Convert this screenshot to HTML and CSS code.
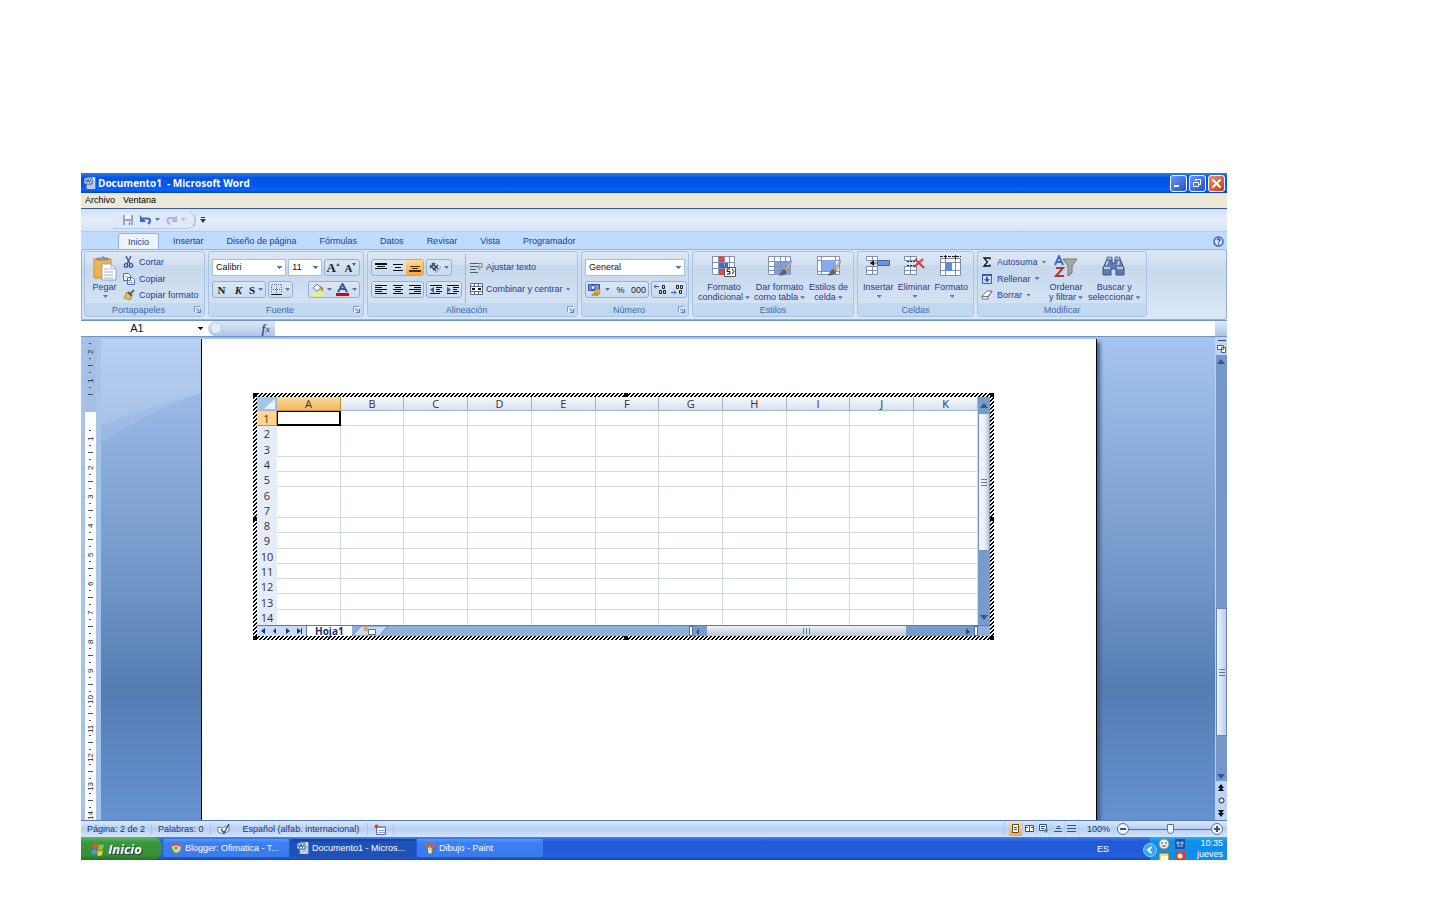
FILE: index.html
```html
<!DOCTYPE html>
<html lang="es">
<head>
    <meta charset="UTF-8">
    <title>Documento1 - Microsoft Word</title>
    <link rel="stylesheet" href="styles.css">
</head>
<body>
<svg class="defs" width="0" height="0">
    <symbol id="word" viewBox="0 0 12 12">
        <path d="M3 0h8v12H3z" fill="#fff" stroke="#8fa8d0"/>
        <path d="M6 4h4M6 6h4M4 8h6M4 10h6" stroke="#6f8dc4"/>
        <path d="M0 1h8v6H0z" fill="#e7effc" stroke="#3059a8"/>
        <path d="M1.500 2.500l1 3 1.500-3 1.500 3 1-3" fill="none" stroke="#1d3f94"/>
    </symbol>
    <symbol id="launcher" viewBox="0 0 7 7">
        <path d="M1.500 6.500V1.500H6.500" fill="none" stroke="#fff"/>
        <path d="M.5 6V.5H6" fill="none" stroke="#8099c0"/>
        <path d="M2.500 2.500l3 3M6.500 3v3.500H3" fill="none" stroke="#5f7dae"/>
    </symbol>
    <symbol id="brush" viewBox="0 0 14 16">
        <path d="M13 0L8 8l2 2 4-9z" fill="#b9c3cf" stroke="#76818f" stroke-width=".6"/>
        <path d="M8 7L6 9l3 3 1.500-2z" fill="#c79a50"/>
        <path d="M6 9c-3 1-2 4-6 6 4 1 8 0 9-3z" fill="#5b6470"/>
    </symbol>
</svg>
<div class="window">
    <div class="titleBar">
        <svg class="icon12"><use href="#word"/></svg>
        <h1>Documento1 &nbsp;- Microsoft Word</h1>
        <button class="winBtn" aria-label="Minimizar"><svg width="15" height="15"><path d="M3 10h5" stroke="#fff" stroke-width="2"/></svg></button>
        <button class="winBtn" aria-label="Restaurar"><svg width="15" height="15"><path d="M5.500 5V3.500h5v5H9M5 3.500h6M3.500 6.500h5v4h-5z" fill="none" stroke="#fff"/></svg></button>
        <button class="winBtn closeBtn" aria-label="Cerrar"><svg width="15" height="15"><path d="M3.500 3.500l8 8M11.500 3.500l-8 8" stroke="#fff" stroke-width="2"/></svg></button>
    </div>
    <div class="menuBar">
        <button>Archivo</button>
        <button>Ventana</button>
    </div>
    <div class="quickBar">
        <div class="quickTools">
            <button aria-label="Guardar"><svg width="12" height="12"><path d="M1 1h10v10H1z" fill="#98a8c4"/><path d="M3 1h6v4H3z" fill="#f3f7fd"/><path d="M3 7h6v4H3z" fill="#dfe7f3"/><path d="M7 8h1v3H7z" fill="#667794"/></svg></button>
            <button aria-label="Deshacer"><svg width="12" height="12"><path d="M3 4.500h4c4 0 4 3 1 5.500" fill="none" stroke="#3a66c0" stroke-width="2"/><path d="M0 1v7h6z" fill="#3a66c0"/></svg><i class="arrow"></i></button>
            <button class="off" aria-label="Rehacer"><svg width="12" height="12"><path d="M8 4H4c-4 0-3 5 0 6" fill="none" stroke="#a8b6cf" stroke-width="2"/><path d="M11 1v7H5z" fill="#a8b6cf"/></svg><i class="arrow"></i></button>
        </div>
        <button class="more" aria-label="Personalizar"><svg width="6" height="6"><path d="M1 .5h4" stroke="#1f3c7a"/><path d="M0 2h6L3 6z" fill="#1f3c7a"/></svg></button>
    </div>
    <div class="tabs">
        <button class="tab selectedTab">Inicio</button>
        <button class="tab">Insertar</button>
        <button class="tab">Diseño de página</button>
        <button class="tab">Fórmulas</button>
        <button class="tab">Datos</button>
        <button class="tab">Revisar</button>
        <button class="tab">Vista</button>
        <button class="tab">Programador</button>
        <button class="help" aria-label="Ayuda"><svg width="11" height="11"><circle cx="5.500" cy="5.500" r="4.500" fill="#dce9fc" stroke="#3568bd" stroke-width="1.500"/><path d="M4 4q2-2 3 0 0 1-1.500 2M5.500 7v1.500" fill="none" stroke="#2b56aa" stroke-width="1.400"/></svg></button>
    </div>
    <div class="ribbon">
        <div class="group clipboard">
            <div class="groupBody">
                <button class="big paste">
                    <svg width="26" height="26"><path d="M2 4h17v19H2z" fill="#eeb54f" stroke="#c98d35"/><path d="M5 5h11V3h-3q-1-3-4 0H5z" fill="#8d97a8" stroke="#6d7789" stroke-width=".6"/><path d="M10 9h9l5 5v11H10z" fill="#fff" stroke="#8da4c9"/><path d="M19 9v5h5M12 14h5M12 17h9M12 20h9M12 23h9" fill="none" stroke="#9db2d3"/></svg>
                    <span>Pegar</span><i class="arrow"></i>
                </button>
                <div class="list">
                    <button><svg width="12" height="12"><path d="M3 0l4 8M8 0L4 8" stroke="#44628f" stroke-width="1.500"/><circle cx="3" cy="9.500" r="1.800" fill="none" stroke="#2f4f98" stroke-width="1.300"/><circle cx="8" cy="9.500" r="1.800" fill="none" stroke="#2f4f98" stroke-width="1.300"/></svg>Cortar</button>
                    <button><svg width="12" height="12"><path d="M.5.500h5l2 2v5h-7zM4.500 4.500h5l2 2v5h-7z" fill="#f5f9ff" stroke="#4a6eb5"/><path d="M6 7.500h3M6 9.500h4M2 3.500h2" stroke="#7d9bd2"/></svg>Copiar</button>
                    <button><svg width="12" height="12"><path d="M11 1L7 5" stroke="#666" stroke-width="2"/><path d="M4 3l5 5-2 3-6-2z" fill="#e9bf4b" stroke="#9c7524" stroke-width=".7"/><path d="M5 3l4 4" stroke="#485f88" stroke-width="2"/></svg>Copiar formato</button>
                </div>
            </div>
            <div class="groupTitle">Portapapeles<svg width="7" height="7"><use href="#launcher"/></svg></div>
        </div>
        <div class="group fontGroup">
            <div class="groupBody rows">
                <div class="row">
                    <select class="fontName" aria-label="Fuente"><option>Calibri</option></select>
                    <select class="fontSize" aria-label="Tamaño"><option>11</option></select>
                    <div class="btns push">
                        <button class="serif" aria-label="Aumentar fuente">A<svg width="4" height="9"><path d="M0 3l2-3 2 3z" fill="#345ba8"/></svg></button>
                        <button class="serif small" aria-label="Reducir fuente">A<svg width="4" height="9"><path d="M0 0h4L2 3z" fill="#345ba8"/></svg></button>
                    </div>
                </div>
                <div class="row">
                    <div class="btns">
                        <button class="serif small">N</button>
                        <button class="serif small italic">K</button>
                        <button class="serif small">S<i class="arrow"></i></button>
                    </div>
                    <div class="btns">
                        <button aria-label="Bordes"><svg width="11" height="11"><path d="M1 .5h9M.5 1v8M10.500 1v8M5.500 0v9M0 5.500h11" stroke="#5a6e94" stroke-dasharray="1 1"/><path d="M0 10.500h11" stroke="#111"/></svg><i class="arrow"></i></button>
                    </div>
                    <div class="btns push">
                        <button aria-label="Color de relleno"><svg width="13" height="13"><path d="M2 5l4-4 4 4-4 3z" fill="#fff" stroke="#69799a"/><path d="M9 4q3 1 2 4" fill="none" stroke="#c48a24" stroke-width="2"/><path d="M0 10h13v3H0z" fill="#ff0"/></svg><i class="arrow"></i></button>
                        <button aria-label="Color de fuente"><svg width="13" height="13"><path d="M2 9l4.500-8L11 9M4 6h5" fill="none" stroke="#3a55a8" stroke-width="2"/><path d="M0 10h13v3H0z" fill="#e00000"/></svg><i class="arrow"></i></button>
                    </div>
                </div>
            </div>
            <div class="groupTitle">Fuente<svg width="7" height="7"><use href="#launcher"/></svg></div>
        </div>
        <div class="group alignGroup">
            <div class="groupBody">
                <div class="rows alignCol">
                    <div class="row">
                        <div class="btns">
                            <button aria-label="Alinear arriba"><svg width="12" height="11"><path d="M0 1h12v2H0zM2 4h8v1H2zM0 6h12v1H0z" fill="#111"/></svg></button>
                            <button aria-label="Alinear al medio"><svg width="12" height="11"><path d="M1 2h10v1H1zM3 5h6v1H3zM1 8h10v1H1z" fill="#111"/></svg></button>
                            <button class="on" aria-label="Alinear abajo"><svg width="12" height="11"><path d="M1 4h10v1H1zM3 6h6v1H3zM0 8h12v2H0z" fill="#4b3104"/></svg></button>
                        </div>
                        <div class="btns">
                            <button aria-label="Orientación"><svg width="12" height="11"><path d="M1 3l6 6M3 1l6 6M1 6l5-5M4 8l5-5" stroke="#39465f" stroke-width="1.500"/><path d="M7 11l5-6" stroke="#8998b4"/></svg><i class="arrow"></i></button>
                        </div>
                    </div>
                    <div class="row">
                        <div class="btns">
                            <button aria-label="Izquierda"><svg width="12" height="11"><path d="M0 1.500h12M0 3.500h7M0 5.500h12M0 7.500h7M0 9.500h12" stroke="#111"/></svg></button>
                            <button aria-label="Centrar"><svg width="12" height="11"><path d="M1 1.500h10M3 3.500h6M1 5.500h10M3 7.500h6M1 9.500h10" stroke="#111"/></svg></button>
                            <button aria-label="Derecha"><svg width="12" height="11"><path d="M0 1.500h12M5 3.500h7M0 5.500h12M5 7.500h7M0 9.500h12" stroke="#111"/></svg></button>
                        </div>
                        <div class="btns">
                            <button aria-label="Reducir sangría"><svg width="12" height="11"><path d="M0 1.500h12M6 3.500h6M6 5.500h4M6 7.500h6M0 9.500h10" stroke="#111"/><path d="M4 3v6L0 5.500z" fill="#345fb4"/></svg></button>
                            <button aria-label="Aumentar sangría"><svg width="12" height="11"><path d="M0 1.500h12M6 3.500h6M6 5.500h4M6 7.500h6M0 9.500h10" stroke="#111"/><path d="M0 3v6l4-3.500z" fill="#345fb4"/></svg></button>
                        </div>
                    </div>
                </div>
                <div class="list tall">
                    <button><svg width="13" height="12"><path d="M0 2.500h8M0 5.500h8M0 8.500h6M0 11.500h8" stroke="#4c5c7a"/><path d="M8 2.500h4v4H9M10 4L8 6.500 10 9" fill="none" stroke="#a08045"/></svg>Ajustar texto</button>
                    <button><svg width="13" height="12"><path d="M.5.500h12v11H.5zM0 3.500h13M0 8.500h13M4.500 0v3M8.500 0v3M4.500 9v3M8.500 9v3" fill="#fff" stroke="#59688a"/><path d="M2 6h3M8 6h3" stroke="#111" stroke-width="2"/></svg>Combinar y centrar<i class="arrow"></i></button>
                </div>
            </div>
            <div class="groupTitle">Alineación<svg width="7" height="7"><use href="#launcher"/></svg></div>
        </div>
        <div class="group numGroup">
            <div class="groupBody rows">
                <div class="row">
                    <select class="numFormat" aria-label="Formato de número"><option>General</option></select>
                </div>
                <div class="row">
                    <div class="btns grow">
                        <button aria-label="Moneda"><svg width="14" height="13"><path d="M.5 1.500h11v6H.5z" fill="#6f98ea" stroke="#274f9e"/><circle cx="5" cy="4.500" r="2" fill="#fff" stroke="#274f9e"/><path d="M7 6h5v2H7zM6 9h6v2H6zM4 11h6v2H4z" fill="#e7b322" stroke="#89661b" stroke-width=".4"/></svg><i class="arrow"></i></button>
                        <button>%</button>
                        <button>000</button>
                    </div>
                    <div class="btns">
                        <button aria-label="Aumentar decimales"><svg width="13" height="11"><path d="M0 2.500h5M2 .5l-2 2 2 2" fill="none" stroke="#2c5dc0"/><path d="M8.500 1.500h2v3h-2zM5.500 6.500h2v3h-2zM9.500 6.500h2v3h-2z" fill="none" stroke="#222"/></svg></button>
                        <button aria-label="Disminuir decimales"><svg width="13" height="11"><path d="M0 8.500h5M3 6.500l2 2-2 2" fill="none" stroke="#2c5dc0"/><path d="M5.500 1.500h2v3h-2zM9.500 1.500h2v3h-2zM8.500 6.500h2v3h-2z" fill="none" stroke="#222"/></svg></button>
                    </div>
                </div>
            </div>
            <div class="groupTitle">Número<svg width="7" height="7"><use href="#launcher"/></svg></div>
        </div>
        <div class="group stylesGroup">
            <div class="groupBody">
                <button class="big">
                    <svg width="26" height="22"><path d="M1.500 1.500h22v18h-22z" fill="#fff" stroke="#8394b3"/><path d="M7 1h6v19H7z" fill="#e04a4a"/><path d="M7 7h10v6H7z" fill="#4469c8"/><path d="M1 7.500h23M1 13.500h23M7.500 1v19M13.500 1v19M18.500 1v19" stroke="#8394b3"/><path d="M13.500 12.500h11v9h-11z" fill="#fff" stroke="#555"/><path d="M19 14h-3v2.500h3V19h-3M21 14l2 2.500-2 2.500" fill="none" stroke="#111"/></svg>
                    <span>Formato<br>condicional<i class="arrow"></i></span>
                </button>
                <button class="big">
                    <svg width="26" height="22"><path d="M1.500 1.500h22v18h-22z" fill="#fff" stroke="#8394b3"/><path d="M7 6h17v14H7z" fill="#7ea2e8"/><path d="M1 6.500h23M1 11.500h23M1 15.500h23M7.500 1v19M13.500 1v19M18.500 1v19" stroke="#8394b3"/><use href="#brush" x="11" y="5" width="14" height="16"/></svg>
                    <span>Dar formato<br>como tabla<i class="arrow"></i></span>
                </button>
                <button class="big">
                    <svg width="26" height="22"><path d="M1.500 1.500h22v18h-22zM1 5.500h23M1 16.500h23M5.500 1v19M19.500 1v19" fill="#fff" stroke="#8394b3"/><path d="M6 5h14v11H6z" fill="#83a9f0"/><use href="#brush" x="11" y="5" width="14" height="16"/></svg>
                    <span>Estilos de<br>celda<i class="arrow"></i></span>
                </button>
            </div>
            <div class="groupTitle">Estilos</div>
        </div>
        <div class="group cellsGroup">
            <div class="groupBody">
                <button class="big">
                    <svg width="26" height="22"><path d="M1.500 1.500h11v4h-11zM1.500 11.500h11v8h-11zM7.500 1v4M7.500 12v8M1 15.500h12" fill="#fff" stroke="#7d8eae"/><path d="M12.500 5.500h12v5h-12z" fill="#6c94dc" stroke="#4064ac"/><path d="M5 8h7" stroke="#456"/><path d="M5 8l4-3v6z" fill="#111"/></svg>
                    <span>Insertar</span><i class="arrow"></i>
                </button>
                <button class="big">
                    <svg width="26" height="22"><path d="M3.500 1.500h12v4h-12zM3.500 11.500h12v8h-12zM9.500 1v4M9.500 12v8M3 15.500h12" fill="#fff" stroke="#7d8eae"/><path d="M6 6.500h10M6 10.500h10" stroke="#222" stroke-dasharray="2 1"/><path d="M14 4l9 9M22 4l-9 8" stroke="#e8372c" stroke-width="2"/></svg>
                    <span>Eliminar</span><i class="arrow"></i>
                </button>
                <button class="big">
                    <svg width="26" height="22"><path d="M2.500 3.500h20v17h-20zM2 7.500h21M2 15.500h21M7.500 4v17M17.500 4v17" fill="#fff" stroke="#7d8eae"/><path d="M8 8h6v8H8z" fill="#5c8ae0"/><path d="M2 1.500h21" stroke="#222" stroke-dasharray="3 1"/><path d="M7.500 0v4M17.500 0v4" stroke="#222"/></svg>
                    <span>Formato</span><i class="arrow"></i>
                </button>
            </div>
            <div class="groupTitle">Celdas</div>
        </div>
        <div class="group editGroup">
            <div class="groupBody">
                <div class="list">
                    <button><svg width="12" height="12"><path d="M9 3.500V2H3l3.500 4L3 10h6V8.500" fill="none" stroke="#111" stroke-width="1.300"/></svg>Autosuma<i class="arrow"></i></button>
                    <button><svg width="12" height="12"><path d="M1.500 1.500h9v9h-9z" fill="#cfe0fb" stroke="#365fae"/><path d="M1 1h10v2H1z" fill="#365fae"/><path d="M5 4h2v2h2L6 9.500 3 6h2z" fill="#2d61c8"/></svg>Rellenar<i class="arrow"></i></button>
                    <button><svg width="12" height="12"><path d="M1 7l5-5h5L7 8v2H1z" fill="#fff" stroke="#6a7182"/><path d="M1 7.500h6l4-5" fill="none" stroke="#6a7182"/></svg>Borrar<i class="arrow"></i></button>
                </div>
                <button class="big">
                    <svg width="26" height="24"><path d="M2 10l4-9 4 9M4 7h5" fill="none" stroke="#3c6cc4" stroke-width="2"/><path d="M3 13h7l-7 8h8" fill="none" stroke="#a83a2e" stroke-width="2"/><path d="M10 4h14l-5 7v7l-4 3V11z" fill="#a7a7a3" stroke="#77777a"/></svg>
                    <span>Ordenar<br>y filtrar<i class="arrow"></i></span>
                </button>
                <button class="big">
                    <svg width="26" height="24"><path d="M6 4h5v4h3V4h5l4 9v7h-8v-6h-5v6H2v-7z" fill="#5e7daf" stroke="#3b5584"/><path d="M6 2h5v3H6zM14 2h5v3h-5z" fill="#9eb4d6" stroke="#3b5584" stroke-width=".6"/><path d="M3 13h6M16 13h6M5 10l2-4M17 10l1-4" stroke="#dbe6f6" stroke-width="1.500"/></svg>
                    <span>Buscar y<br>seleccionar<i class="arrow"></i></span>
                </button>
            </div>
            <div class="groupTitle">Modificar</div>
        </div>
    </div>
    <div class="formulaBar">
        <select class="nameBox" aria-label="Cuadro de nombres"><option>A1</option></select>
        <div class="fxBox"><span class="knob"></span><button>f<sub>x</sub></button></div>
        <input class="formula" type="text" aria-label="Barra de fórmulas">
        <span class="expand"></span>
    </div>
    <div class="work">
        <div class="ruler">
            <span>2</span><span>1</span><span></span><span>1</span><span>2</span><span>3</span><span>4</span><span>5</span><span>6</span><span>7</span><span>8</span><span>9</span><span>10</span><span>11</span><span>12</span><span>13</span><span>14</span>
        </div>
        <div class="canvas">
            <svg class="wave" viewBox="0 0 101 482" preserveAspectRatio="none">
                <path d="M0 0h101v54Q45 68 0 87z" fill="#fff" opacity=".12"/>
                <path d="M0 0h101v54Q45 75 0 104z" fill="#fff" opacity=".1"/>
            </svg>
            <div class="page">
                <div class="object">
                    <b class="handle h1"></b><b class="handle h2"></b><b class="handle h3"></b><b class="handle h4"></b>
                    <b class="handle h5"></b><b class="handle h6"></b><b class="handle h7"></b><b class="handle h8"></b>
                    <div class="sheet">
                        <div class="sheetTop">
                            <table class="grid">
                                <thead>
                                <tr><th class="corner"><svg width="12" height="10"><path d="M11 0v10H0z" fill="#eaf1fc"/></svg></th><th class="active">A</th><th>B</th><th>C</th><th>D</th><th>E</th><th>F</th><th>G</th><th>H</th><th>I</th><th>J</th><th>K</th></tr>
                                </thead>
                                <tbody>
                                <tr><th class="active">1</th><td class="cursor"></td><td></td><td></td><td></td><td></td><td></td><td></td><td></td><td></td><td></td><td></td></tr>
                                <tr class="plain"><th>2</th><td></td><td></td><td></td><td></td><td></td><td></td><td></td><td></td><td></td><td></td><td></td></tr>
                                <tr><th>3</th><td></td><td></td><td></td><td></td><td></td><td></td><td></td><td></td><td></td><td></td><td></td></tr>
                                <tr><th>4</th><td></td><td></td><td></td><td></td><td></td><td></td><td></td><td></td><td></td><td></td><td></td></tr>
                                <tr><th>5</th><td></td><td></td><td></td><td></td><td></td><td></td><td></td><td></td><td></td><td></td><td></td></tr>
                                <tr class="plain"><th>6</th><td></td><td></td><td></td><td></td><td></td><td></td><td></td><td></td><td></td><td></td><td></td></tr>
                                <tr><th>7</th><td></td><td></td><td></td><td></td><td></td><td></td><td></td><td></td><td></td><td></td><td></td></tr>
                                <tr><th>8</th><td></td><td></td><td></td><td></td><td></td><td></td><td></td><td></td><td></td><td></td><td></td></tr>
                                <tr><th>9</th><td></td><td></td><td></td><td></td><td></td><td></td><td></td><td></td><td></td><td></td><td></td></tr>
                                <tr><th>10</th><td></td><td></td><td></td><td></td><td></td><td></td><td></td><td></td><td></td><td></td><td></td></tr>
                                <tr><th>11</th><td></td><td></td><td></td><td></td><td></td><td></td><td></td><td></td><td></td><td></td><td></td></tr>
                                <tr><th>12</th><td></td><td></td><td></td><td></td><td></td><td></td><td></td><td></td><td></td><td></td><td></td></tr>
                                <tr><th>13</th><td></td><td></td><td></td><td></td><td></td><td></td><td></td><td></td><td></td><td></td><td></td></tr>
                                <tr class="plain"><th>14</th><td></td><td></td><td></td><td></td><td></td><td></td><td></td><td></td><td></td><td></td><td></td></tr>
                                </tbody>
                            </table>
                            <div class="sheetScroll">
                                <svg width="12" height="16"><path d="M2 11h8L6 6z" fill="#36588f"/></svg>
                                <span class="thumb"><svg width="6" height="7"><path d="M0 .5h6M0 3.500h6M0 6.500h6" stroke="#6c7d9a"/></svg></span>
                                <svg class="down" width="12" height="13"><path d="M2 3h8L6 8z" fill="#36588f"/></svg>
                            </div>
                        </div>
                        <div class="sheetTabs">
                            <div class="nav">
                                <button aria-label="Primera hoja"><svg width="6" height="6"><path d="M5 0v6L1 3z" fill="#17396f"/></svg></button>
                                <button aria-label="Hoja anterior"><svg width="6" height="6"><path d="M4 0v6L1 3z" fill="#17396f"/></svg></button>
                                <button aria-label="Hoja siguiente"><svg width="6" height="6"><path d="M1 0v6l4-3z" fill="#17396f"/></svg></button>
                                <button aria-label="Última hoja"><svg width="6" height="6"><path d="M0 0v6l4-3zM4 0h1v6H4z" fill="#17396f"/></svg></button>
                            </div>
                            <button class="sheetTab">Hoja1</button>
                            <button class="newTab" aria-label="Insertar hoja"><svg width="36" height="10"><path d="M0 10L9 0h27l-9 10z" fill="#c8dbf6" stroke="#6484b8"/><path d="M16.500 3.500h7v5h-7z" fill="#fff" stroke="#56709e"/><path d="M11 3h6M14 0v6M12 1l4 4M16 1l-4 4" stroke="#e89a2b"/></svg></button>
                            <div class="hScroll">
                                <i class="split"></i>
                                <svg width="14" height="10"><path d="M6 2v7l-3-3z" fill="#36588f"/></svg>
                                <span class="hThumb"><svg width="7" height="6"><path d="M.5 0v6M3.500 0v6M6.500 0v6" stroke="#6c7d9a"/></svg></span>
                                <svg class="right" width="14" height="10"><path d="M6 2v7l4-3z" fill="#294a85"/></svg>
                                <i class="split"></i>
                            </div>
                        </div>
                    </div>
                </div>
            </div>
        </div>
        <div class="scroll">
            <svg width="11" height="15"><path d="M2 .5h8" stroke="#345"/><path d="M1.500 5.500h6v4h-6zM5.500 7.500h4v5h-4z" fill="#fff" stroke="#4a5f88"/></svg>
            <div class="track">
                <svg width="11" height="12"><path d="M1 9h8L5 4z" fill="#36588f"/></svg>
                <span class="docThumb"><svg width="6" height="7"><path d="M0 .5h6M0 3.500h6M0 6.500h6" stroke="#5f7396"/></svg></span>
                <svg width="11" height="10"><path d="M1 3h8L5 8z" fill="#36588f"/></svg>
            </div>
            <button aria-label="Página anterior"><svg width="9" height="9"><path d="M1 5l3-4 3 4zM1 8l3-4 3 4z" fill="#111"/></svg></button>
            <button aria-label="Seleccionar objeto"><svg width="9" height="9"><circle cx="4.500" cy="4.500" r="2.500" fill="#dbe6f6" stroke="#222"/></svg></button>
            <button aria-label="Página siguiente"><svg width="9" height="9"><path d="M1 1h6L4 5zM1 4h6L4 8z" fill="#111"/></svg></button>
        </div>
    </div>
    <div class="statusBar">
        <span class="cell">Página: 2 de 2</span>
        <span class="cell">Palabras: 0</span>
        <span class="cell spell"><svg width="14" height="12"><path d="M1 4l5 1 6-3v6l-6 3-5-2z" fill="#fff" stroke="#6f7f9c"/><path d="M4 6l3 4 5-9" fill="none" stroke="#42557c" stroke-width="1.500"/></svg></span>
        <span class="cell language">Español (alfab. internacional)</span>
        <span class="cell"><svg width="13" height="11"><path d="M2.500 2.500h9v8h-9z" fill="#fff" stroke="#56719f"/><path d="M3 2h9v2H3z" fill="#6f9ae0"/><path d="M4 6.500h7M4 8.500h7" stroke="#8aa3cd"/><circle cx="2.500" cy="2.500" r="2" fill="#d9422f"/></svg></span>
        <div class="views">
            <button class="on" aria-label="Diseño de impresión"><svg width="11" height="10"><path d="M2.500.500h6v8h-6zM4 3.500h3M4 5.500h3" fill="#fff" stroke="#5b4a25"/></svg></button>
            <button aria-label="Lectura"><svg width="11" height="10"><path d="M1.500 1.500h4v6h-4zM5.500 1.500h4v6h-4zM2 3.500h2M7 3.500h2" fill="#fff" stroke="#33518a"/></svg></button>
            <button aria-label="Diseño web"><svg width="11" height="10"><path d="M1.500.500h7v6h-7zM3 2.500h4M3 4.500h3" fill="#fff" stroke="#33518a"/><circle cx="8" cy="6.500" r="2" fill="#519b73"/></svg></button>
            <button aria-label="Esquema"><svg width="11" height="10"><path d="M5 2.500h3M4 4.500h5M2 7.500h8" stroke="#33518a"/></svg></button>
            <button aria-label="Borrador"><svg width="11" height="10"><path d="M1 1.500h9M1 4.500h9M1 7.500h9" stroke="#33518a"/></svg></button>
        </div>
        <span class="percent">100%</span>
        <button aria-label="Alejar"><svg width="12" height="12"><circle cx="6" cy="6" r="5.500" fill="#eef4fd" stroke="#5b6f95"/><path d="M3 6h6" stroke="#3c4f76" stroke-width="2"/></svg></button>
        <input class="zoom" type="range" min="0" max="100" value="50" aria-label="Zoom">
        <button aria-label="Acercar"><svg width="12" height="12"><circle cx="6" cy="6" r="5.500" fill="#eef4fd" stroke="#5b6f95"/><path d="M3 6h6M6 3v6" stroke="#3c4f76" stroke-width="2"/></svg></button>
    </div>
    <div class="taskBar">
        <button class="start"><svg width="14" height="14"><path d="M2 2q3-2 5 0L6 7Q4 5 1 7z" fill="#e8532b"/><path d="M8 2q3 2 5 0l-1 5q-3 2-5 0z" fill="#8cc63c"/><path d="M1 8q3-2 5 0l-1 5Q3 11 0 13z" fill="#4b8df0"/><path d="M7 8q3 2 5 0l-1 5q-3 2-5 0z" fill="#f9c92c"/></svg>Inicio</button>
        <button class="task"><svg width="12" height="12"><circle cx="6" cy="6" r="5" fill="#f4c832"/><path d="M1 4q5-7 10 0L6 5z" fill="#dd4535"/><path d="M1 4l4 7q-6-1-4-7z" fill="#3fa24e"/><circle cx="6" cy="6" r="2.300" fill="#4a84e8" stroke="#fff"/></svg>Blogger: Ofimatica - T...</button>
        <button class="task current"><svg width="12" height="12"><use href="#word"/></svg>Documento1 - Micros...</button>
        <button class="task"><svg width="12" height="12"><path d="M3 5h6l-1 7H4z" fill="#d8e6e2" stroke="#3f6f73"/><path d="M4 6L1 1M6 6V0M8 6l3-5" stroke="#d9622b" stroke-width="2"/><path d="M5 5l3 4" stroke="#f2c230" stroke-width="2"/></svg>Dibujo - Paint</button>
        <span class="lang">ES</span>
        <div class="tray">
            <button class="chevron" aria-label="Mostrar iconos ocultos"><svg width="14" height="14"><circle cx="7" cy="7" r="6.500" fill="#3aa5f2" stroke="#8fd0fb"/><path d="M8.500 4L5 7l3.500 3" fill="none" stroke="#fff" stroke-width="2"/></svg></button>
            <div class="trayIcons">
                <svg width="12" height="12"><circle cx="6" cy="6" r="5" fill="#f1efdf" stroke="#97916f"/><path d="M3 5h2M7 5h2M4 8h4" stroke="#555"/></svg>
                <svg width="12" height="12"><path d="M1 1h10v10H1z" fill="#1e4f9c"/><path d="M3 4h2v2H3zM7 4h2v2H7zM3 8h6" fill="none" stroke="#a7c8f5"/></svg>
                <svg width="12" height="12"><path d="M1 2h10v9H1z" fill="#f5d871" stroke="#8c6a1d"/><path d="M3 5h7v4H3z" fill="#fff"/></svg>
                <svg width="12" height="12"><path d="M1 1h10v10H1z" fill="#e23c28"/><circle cx="6" cy="5" r="2.500" fill="#fff"/></svg>
            </div>
            <div class="clock">10:35<br>jueves</div>
        </div>
    </div>
</div>
</body>
</html>
```

FILE: styles.css
```css
*{ box-sizing: border-box; margin: 0; padding: 0;}
body{ min-height: 100vh; display: flex; flex-direction: column; padding: 173px 213px 40px 81px; background: #fff; font: 9px/12px "Liberation Sans", Arial, sans-serif; color: #1e3c8c;}
button, input, select{ font: inherit; color: inherit; border: 0; background: none;}
button{ display: flex; align-items: center; justify-content: center; white-space: nowrap; cursor: pointer;}
svg{ display: block; flex: none;}
select{ appearance: none;}
.defs{ position: absolute;}
.window{ flex: 1; display: flex; flex-direction: column; background: #bfdbff; overflow: hidden;}
.arrow{ display: inline-block; flex: none; width: 5px; height: 3px; margin-left: 3px; background: #5a76a8; clip-path: polygon(0 0, 100% 0, 50% 100%); vertical-align: middle;}

/* title and menu */
.titleBar{ height: 20px; display: flex; align-items: center; gap: 2px; padding: 0 2px 0 3px; background: linear-gradient(#2a7df5, #0453e0 25%, #0356ea 60%, #0666fb 85%, #0340b8);}
.titleBar h1{ flex: 1; font: bold 10px/12px "Open Sans", sans-serif; color: #fff;}
.icon12{ width: 12px; height: 12px;}
.winBtn{ width: 17px; height: 17px; border: 1px solid #fff; border-radius: 3px; background: linear-gradient(135deg, #6a95f4, #2353d4);}
.closeBtn{ background: linear-gradient(135deg, #ee8e6a, #cf3a13);}
.menuBar{ height: 16px; display: flex; gap: 8px; padding: 0 4px 2px; background: #ece9d8; border-bottom: 1px solid #3d5a8c; color: #000;}

/* quick access */
.quickBar{ height: 22px; display: flex; align-items: center; padding-left: 32px; background: linear-gradient(#cfe0f7, #e6effb 50%, #d5e4f8);}
.quickTools{ height: 17px; display: flex; align-items: center; gap: 6px; padding: 0 9px; border-right: 1px solid #8fa9d2; border-bottom: 1px solid #b9cdeb; border-radius: 0 9px 9px 0; background: #dde9f9;}
.off .arrow{ background: #a8b6cf;}
.more{ margin-left: 4px;}

/* tabs */
.tabs{ height: 18px; display: flex; align-items: flex-end; padding: 0 3px 0 37px; border-top: 1px solid #b0c8ec; background: #bfdbff;}
.tab{ height: 16px; padding: 0 9px; margin-right: 5px; color: #15428b;}
.selectedTab{ border: 1px solid #8db2e3; border-bottom: 0; border-radius: 3px 3px 0 0; background: #edf4fd;}
.help{ height: 16px; margin-left: auto;}

/* ribbon */
.ribbon{ display: flex; gap: 3px; padding: 1px 2px 2px; background: linear-gradient(#dce8f6, #c8d9ed 30%, #dbe8f6); border: 1px solid #8db2e3; border-radius: 3px;}
.group{ flex: none; display: flex; flex-direction: column; border: 1px solid #a9c3e2; border-radius: 3px; background: linear-gradient(#dee8f5, #d1dff0 20%, #c7d8ed 22%, #d8e6f5);}
.groupBody{ height: 51px; display: flex; padding: 2px 3px 0;}
.groupTitle{ position: relative; height: 13px; display: flex; align-items: center; justify-content: center; padding-right: 12px; background: #c1d8f1; color: #3e6aaa;}
.groupTitle svg{ position: absolute; right: 3px; top: 3px;}
.clipboard{ width: 121px;}
.fontGroup{ width: 156px;}
.alignGroup{ width: 211px;}
.numGroup{ width: 108px;}
.stylesGroup{ width: 162px;}
.cellsGroup{ width: 117px;}
.editGroup{ width: 170px;}
.stylesGroup .groupTitle, .cellsGroup .groupTitle, .editGroup .groupTitle{ padding-right: 0;}
.big{ flex: 1 1 auto; flex-direction: column; justify-content: flex-start; padding-top: 1px; line-height: 10px; text-align: center;}
.big svg{ height: 27px;}
.big > .arrow{ margin: 3px 0 0;}
.big .arrow{ margin-left: 2px;}
.paste{ flex: none; width: 33px; margin-right: 2px;}
.list{ display: flex; flex-direction: column; justify-content: space-between; align-items: flex-start;}
.list button{ height: 16px; gap: 4px;}
.list button .arrow{ margin-left: 0;}
.tall{ justify-content: flex-start; gap: 6px; padding: 5px 0 0 4px; border-left: 1px solid #9db8dc; margin-left: 3px;}
.tall button{ gap: 3px;}
.rows{ display: flex; flex-direction: column; gap: 5px; padding-top: 7px;}
.row{ display: flex; gap: 2px;}
.btns{ display: flex; height: 17px; border: 1px solid #8fb0da; border-radius: 3px; background: linear-gradient(#dbe7f5, #c9dbf0);}
.btns button{ min-width: 17px; padding: 0 2px; color: #222;}
.btns .on, .views .on{ background: linear-gradient(#fbdb9c, #fba53f);}
.push{ margin-left: auto;}
.grow{ flex: 1; justify-content: space-between;}
.alignCol{ padding-top: 5px;}
.btns .serif{ font: bold 13px/14px "Liberation Serif", serif;}
.btns .small{ font-size: 11px;}
.btns .italic{ font-style: italic;}
.row select{ height: 17px; padding: 0 12px 2px 3px; border: 1px solid #a3c0e8; color: #111; background: conic-gradient(from -45deg at 50% 100%, #5a76a8 90deg, #fff 0) no-repeat right 3px center / 5px 3px, #fff;}
.fontName{ width: 77px;}
.fontSize{ width: 34px;}
.row .numFormat{ width: 100%;}

/* formula bar */
.formulaBar{ height: 17px; display: flex; border: 1px solid #6f93c4; border-width: 1px 0; background: #fff;}
.nameBox{ width: 127px; padding: 0 20px 2px 5px; text-align: center; text-align-last: center; color: #111; font-size: 11px; background: conic-gradient(from -45deg at 50% 100%, #111 90deg, transparent 0) no-repeat right 5px center / 5px 3px;}
.fxBox{ width: 67px; display: flex; justify-content: space-between; padding: 0 5px 0 2px; background: linear-gradient(#dce9fa, #aec5e8); border-radius: 8px 0 0 8px;}
.fxBox button{ font: italic bold 12px/12px "Liberation Serif", serif; color: #3d5682;}
.fxBox sub{ font-size: 9px;}
.knob{ width: 12px; height: 12px; margin-top: 1px; border-radius: 6px; border: 1px solid #b8cbe6; background: #e1ebf9;}
.formula{ flex: 1; min-width: 0;}
.expand{ width: 12px; background: linear-gradient(#e0ebfa, #a9c2e8);}

/* document */
.work{ flex: 1; display: flex; padding-left: 4px; background: #a6c3ea;}
.ruler{ width: 11px; margin-right: 5px; contain: size; overflow: hidden; font-size: 8px; color: #223; background: linear-gradient(#a6bfe4 75px, #fff 75px);}
.ruler span{ height: 29px; display: flex; align-items: center; justify-content: center; writing-mode: vertical-rl; transform: rotate(180deg); line-height: 11px; background: linear-gradient(#456, #456) no-repeat center top / 5px 1px, linear-gradient(#456, #456) no-repeat center 7px / 2px 1px, linear-gradient(#456, #456) no-repeat center 22px / 2px 1px;}
.canvas{ position: relative; flex: 1; display: flex; margin-top: 2px; padding: 0 118px 0 100px; background: linear-gradient(#a5c4ef, #6f94c6 52%, #557db2 73%, #6692d2);}
.wave{ position: absolute; left: 0; top: 0; width: 100px; height: 100%;}
.page{ flex: 1; min-width: 0; padding: 54px 102px 0 51px; background: #fff; border: 1px solid #000; border-width: 0 1px; box-shadow: 3px 3px 4px #3d5a86; clip-path: inset(0 -8px 0 0);}
.object{ position: relative; padding: 4px; background: linear-gradient(135deg, #000 25%, #fff 0 50%, #000 0 75%, #fff 0) 0 0 / 4px 4px;}
.handle{ position: absolute; width: 4px; height: 4px; background: #000;}
.h1, .h2, .h3{ top: 0;}
.h6, .h7, .h8{ bottom: 0;}
.h4, .h5{ top: 50%;}
.h1, .h4, .h6{ left: 0;}
.h2, .h7{ left: 50%;}
.h3, .h5, .h8{ right: 0;}
.sheet{ background: #fff;}
.sheetTop{ display: flex;}
.grid{ flex: 1; width: 100%; min-width: 0; height: 228px; table-layout: fixed; border-collapse: separate; border-spacing: 0; font: 11px/12px "Open Sans", sans-serif;}
.grid th{ font-weight: normal; color: #333; background: #e4ecf7; line-height: 11px;}
.grid thead th{ height: 14px; background: linear-gradient(#f8fafd, #d7e1ef); border: 1px solid #9eb6ce; border-width: 0 1px 1px 0;}
.grid tbody th{ height: 15px;}
.grid td{ border: 1px solid #d0d7e5; border-width: 0 1px 1px 0;}
.grid .plain td{ border-bottom: 0;}
.grid .corner{ width: 20px; background: #a9c4e9;}
.corner svg{ margin-left: auto;}
.grid thead .active{ background: linear-gradient(#f9d99f, #f1b857); border-color: #c79040;}
.grid tbody .active{ background: #ffd58d; border: 1px solid #c79040; border-width: 0 1px 1px 0;}
.grid .cursor{ border: 2px solid #000; border-width: 1px 2px 2px 1px;}
.sheetScroll{ flex: none; width: 12px; display: flex; flex-direction: column; background: #769bcd;}
.thumb{ height: 138px; display: flex; align-items: center; justify-content: center; border: 1px solid #7c94ba; background: linear-gradient(90deg, #eef2f8 50%, #b7cae5);}
.down{ margin-top: auto;}
.sheetTabs{ height: 11px; display: flex; background: #8fafdc; border-top: 1px solid #5b7bb0;}
.nav{ width: 50px; display: flex; justify-content: space-around; background: #c8dbf6; border-right: 1px solid #6484b8;}
.sheetTab{ padding: 0 8px; background: #fff; font: bold 10px/10px "Open Sans", sans-serif; color: #15306b;}
.hScroll{ width: 289px; display: flex; margin: 0 12px 0 auto; background: #769bcd;}
.split{ width: 4px; border: 1px solid #4870ac; background: #fff;}
.hThumb{ width: 199px; display: flex; align-items: center; justify-content: center; background: linear-gradient(#eef2f8, #b7c6db);}
.right{ margin-left: auto;}
.scroll{ width: 12px; display: flex; flex-direction: column; align-items: center; padding: 3px 0 0; background: #bcd4f8;}
.scroll button{ height: 13px;}
.track{ flex: 1; width: 100%; display: flex; flex-direction: column; align-items: center; background: #7598cb; border-left: 1px solid #b9d2f7;}
.docThumb{ width: 100%; height: 128px; display: flex; align-items: center; justify-content: center; margin: auto 0 35px; border: 1px solid #6787b8; background: linear-gradient(90deg, #edf3fc, #b9cfed);}

/* status bar */
.statusBar{ height: 17px; display: flex; align-items: center; padding: 0 4px 0 0; border-top: 1px solid #557bb5; background: linear-gradient(#dce9fb, #b5cff3 50%, #d5e5fa); color: #16327a;}
.cell{ padding: 0 6px; border-right: 1px solid #a9c3ea;}
.spell{ border: 0;}
.language{ padding-right: 8px;}
.views{ display: flex; margin-left: auto; padding: 0 1px 0 4px; border-left: 1px solid #a9c3ea;}
.views button{ width: 14px; height: 14px; border-right: 1px solid #b6cdee;}
.percent{ margin: 0 7px;}
.zoom{ width: 82px; height: 12px; appearance: none; background: linear-gradient(#5b6f95, #5b6f95) no-repeat center / 100% 1px;}
.zoom::-webkit-slider-thumb{ appearance: none; width: 7px; height: 10px; border: 1px solid #5b6f95; border-radius: 0 0 4px 4px; background: #f1f6fe;}

/* task bar */
.taskBar{ height: 23px; display: flex; align-items: stretch; overflow: hidden; background: linear-gradient(#3f86ef, #2259d9 18%, #245edc 85%, #1c45ab); color: #fff;}
.start{ width: 81px; gap: 3px; padding-right: 10px; border-radius: 0 9px 9px 0; background: linear-gradient(#5cb85a, #3a973b 25%, #378f37 80%, #27702a); font: italic bold 13px/16px "Open Sans", sans-serif; text-shadow: 1px 1px 1px #234;}
.task{ width: 126px; height: 18px; margin: 2px 0 0 1px; justify-content: flex-start; gap: 3px; padding-left: 7px; border-radius: 2px; background: linear-gradient(#5b9bfb, #3b7ff3 20%, #3a7bee);}
.current{ background: linear-gradient(#173f96, #1f52b8 20%);}
.lang{ margin: 6px 41px 0 auto;}
.tray{ width: 77px; display: flex; background: linear-gradient(#2fb0f5, #0e8ee9 20%, #1090ea);}
.chevron{ margin: 6px 0 0 -7px; align-items: flex-start;}
.trayIcons{ display: grid; grid-template-columns: 12px 12px; gap: 1px 4px; margin: 1px 0 0 1px; align-content: start;}
.clock{ margin: 1px 4px 0 auto; line-height: 11px; text-align: right;}
```
